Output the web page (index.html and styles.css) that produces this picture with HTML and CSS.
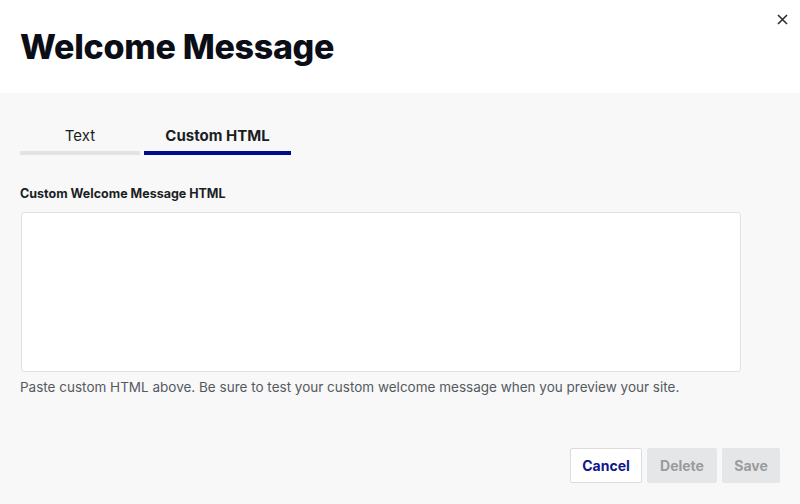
FILE: index.html
```html
<!DOCTYPE html>
<html lang="en">
<head>
<meta charset="utf-8">
<link rel="stylesheet" href="styles.css">
</head>
<body>
<div class="modal">
  <header class="modal-header">
    <h1 class="title">Welcome Message</h1>
    <button class="close" aria-label="Close">
      <svg width="11" height="11" viewBox="0 0 11 11"><path d="M1 1L10 10M10 1L1 10" stroke="#2b2f36" stroke-width="1.6" fill="none"/></svg>
    </button>
  </header>
  <main class="modal-body">
    <div class="tabs">
      <div class="tab tab-text">Text</div>
      <div class="tab tab-html active">Custom HTML</div>
    </div>
    <label class="field-label">Custom Welcome Message HTML</label>
    <textarea class="field"></textarea>
    <p class="hint">Paste custom HTML above. Be sure to test your custom welcome message when you preview your site.</p>
    <div class="actions">
      <button class="btn btn-cancel">Cancel</button>
      <button class="btn btn-disabled btn-delete">Delete</button>
      <button class="btn btn-disabled btn-save">Save</button>
    </div>
  </main>
</div>
</body>
</html>
```
FILE: styles.css
```css
html, body {
  margin: 0;
  padding: 0;
  height: 100%;
}
body {
  font-family: "Inter", "Liberation Sans", sans-serif;
  background: #f8f8f8;
  color: #1b1e24;
}
.modal {
  display: flex;
  flex-direction: column;
  height: 504px;
  position: relative;
}
.modal-header {
  background: #ffffff;
  height: 93px;
  box-sizing: border-box;
  padding: 26px 20px 0;
}
.title {
  margin: 0;
  font-size: 34px;
  line-height: 42px;
  font-weight: 800;
  color: #0b0e16;
  letter-spacing: -0.3px;
}
.close {
  position: absolute;
  top: 14px;
  right: 12px;
  width: 11px;
  height: 11px;
  padding: 0;
  border: 0;
  background: transparent;
  display: flex;
}
.modal-body {
  flex: 1;
  background: #f8f8f8;
  padding: 28px 20px 0 20px;
  display: flex;
  flex-direction: column;
}
.tabs {
  display: flex;
  gap: 4px;
}
.tab {
  padding: 6px 0;
  line-height: 18px;
  font-size: 15px;
  text-align: center;
  border-bottom: 4px solid #e2e3e4;
  color: #1b1e24;
}
.tab-text { width: 120px; }
.tab-html { width: 147px; }
.tab.active {
  border-bottom-color: #000c8c;
  font-weight: 700;
}
.field-label {
  margin-top: 31px;
  font-size: 12.5px;
  line-height: 16px;
  font-weight: 700;
  color: #1b1e24;
}
.field {
  margin-top: 10px;
  width: 720px;
  height: 160px;
  box-sizing: border-box;
  border: 1px solid #e0e0e0;
  border-radius: 3px;
  background: #ffffff;
  resize: none;
  margin-left: 1px;
}
.hint {
  margin: 5px 0 0;
  font-size: 13.5px;
  line-height: 20px;
  color: #555a60;
}
.actions {
  display: flex;
  justify-content: flex-end;
  gap: 5px;
  margin-top: 51px;
}
.btn {
  height: 35px;
  box-sizing: border-box;
  font-family: inherit;
  font-size: 14px;
  font-weight: 700;
  border-radius: 2px;
  padding: 0;
}
.btn-cancel {
  background: #ffffff;
  border: 1px solid #dcdcdc;
  color: #0f158c;
  width: 72px;
}
.btn-disabled {
  background: #e5e6e7;
  border: 1px solid #e5e6e7;
  color: #9a9b9d;
}
.btn-delete { width: 70px; }
.btn-save { width: 58px; }
```
